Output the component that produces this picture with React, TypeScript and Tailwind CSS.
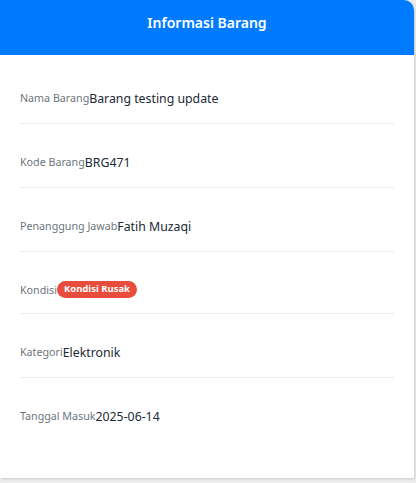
const rows = [
  { label: "Nama Barang", value: "Barang testing update" },
  { label: "Kode Barang", value: "BRG471" },
  { label: "Penanggung Jawab", value: "Fatih Muzaqi" },
  { label: "Kondisi", badge: "Kondisi Rusak" },
  { label: "Kategori", value: "Elektronik" },
  { label: "Tanggal Masuk", value: "2025-06-14" },
];

export default function App() {
  return (
    <div className="min-h-[483px] bg-[#eeeeee] font-['Noto_Sans',sans-serif]">
      <div className="w-[414px] bg-white rounded-tr-[10px] shadow-[1px_1px_3px_rgba(0,0,0,0.15)] overflow-hidden">
        <div className="h-[55px] bg-[#007bff] flex justify-center pt-[12px]">
          <h2 className="text-white text-[14px] leading-[22px] font-semibold">Informasi Barang</h2>
        </div>
        <div className="px-5 pt-[5px] pb-[37px]">
          {rows.map((row, i) => (
            <div
              key={i}
              className={`flex pt-[30px] pb-[15px] ${i < rows.length - 1 ? "border-b border-[#ececec]" : ""}`}
            >
              <span className="text-[10.7px] leading-[16px] text-[#6c757d]">{row.label}</span>
              {row.badge ? (
                <span className="mt-[-1px] h-[17px] px-[7px] rounded-full bg-[#e74c3c] text-white text-[9.5px] font-bold flex items-center">
                  {row.badge}
                </span>
              ) : (
                <span className="text-[12.3px] leading-[18px] text-[#212936]">{row.value}</span>
              )}
            </div>
          ))}
        </div>
      </div>
    </div>
  );
}
